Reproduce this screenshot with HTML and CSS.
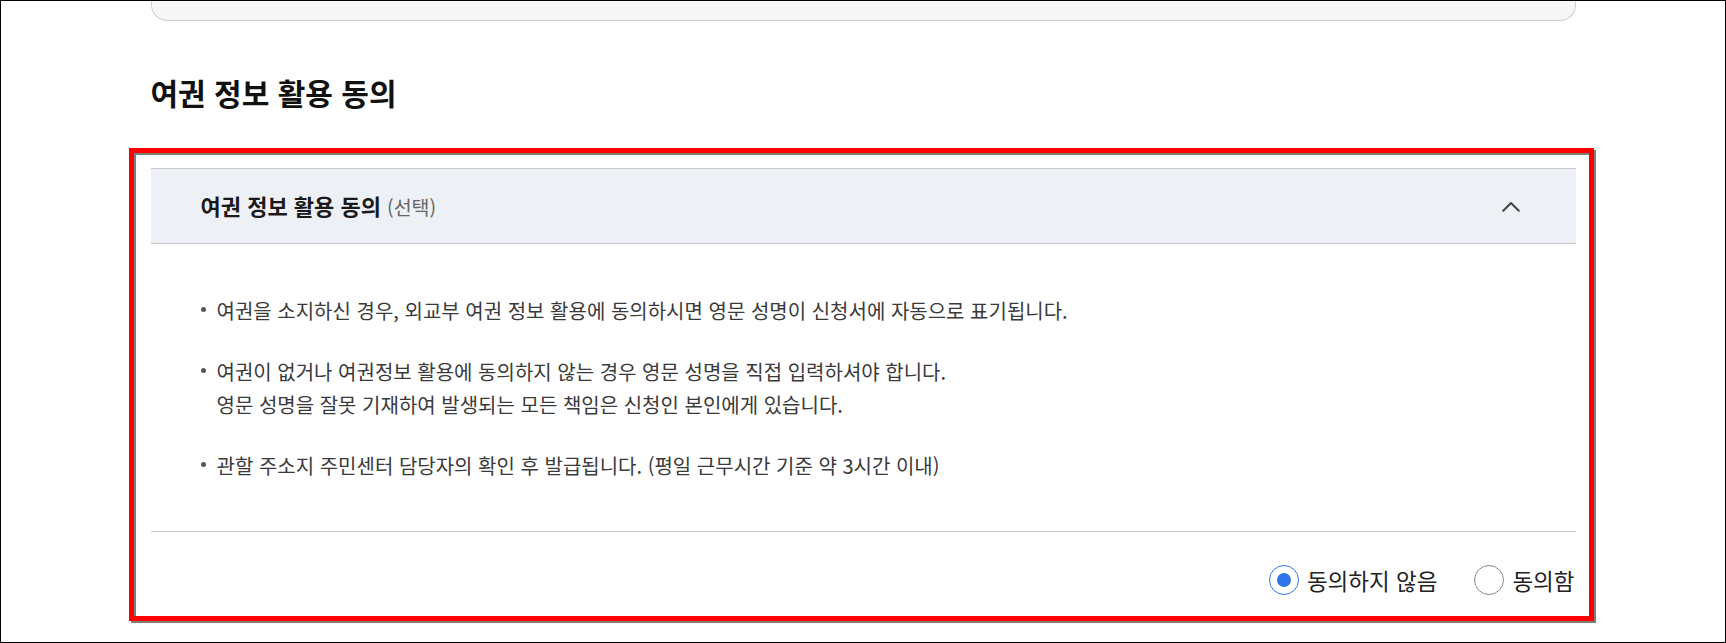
FILE: index.html
```html
<!DOCTYPE html>
<html lang="ko">
<head>
<meta charset="utf-8">
<title>여권 정보 활용 동의</title>
<link rel="stylesheet" href="styles.css">
</head>
<body>
<div class="frame">
  <div class="column">
    <div class="prev-card"></div>
    <h2 class="section-title">여권 정보 활용 동의</h2>
    <div class="highlight">
      <section class="accordion">
        <div class="acc-head">
          <div class="acc-title"><strong>여권 정보 활용 동의</strong> <span class="opt">(선택)</span></div>
          <svg class="chevron" width="18" height="11" viewBox="0 0 18 11" aria-hidden="true">
            <path d="M1.2 9.8 L9 2 L16.8 9.8" fill="none" stroke="#444" stroke-width="2" stroke-linecap="round" stroke-linejoin="round"/>
          </svg>
        </div>
        <div class="acc-body">
          <ul class="notes">
            <li>여권을 소지하신 경우, 외교부 여권 정보 활용에 동의하시면 영문 성명이 신청서에 자동으로 표기됩니다.</li>
            <li>여권이 없거나 여권정보 활용에 동의하지 않는 경우 영문 성명을 직접 입력하셔야 합니다.<br>영문 성명을 잘못 기재하여 발생되는 모든 책임은 신청인 본인에게 있습니다.</li>
            <li>관할 주소지 주민센터 담당자의 확인 후 발급됩니다. (평일 근무시간 기준 약 3시간 이내)</li>
          </ul>
        </div>
        <div class="choices">
          <label class="choice"><span class="radio checked"></span><span class="choice-text">동의하지 않음</span></label>
          <label class="choice"><span class="radio"></span><span class="choice-text">동의함</span></label>
        </div>
      </section>
    </div>
  </div>
</div>
</body>
</html>
```
FILE: styles.css
```css
html, body {
  margin: 0;
  padding: 0;
  background: #fff;
  height: 643px;
  overflow: hidden;
}

body {
  font-family: "Noto Sans CJK KR", "Noto Sans", sans-serif;
  color: #222;
}

.frame {
  box-sizing: border-box;
  height: 643px;
  border: 1px solid #000;
  overflow: hidden;
}

.column {
  width: 1425px;
  margin: 0 auto;
}

.prev-card {
  box-sizing: border-box;
  height: 20px;
  background: #f7f7f7;
  border: 1px solid #cfcfcf;
  border-top: none;
  border-radius: 0 0 16px 16px;
}

.section-title {
  margin: 52px 0 0;
  font-size: 30px;
  line-height: 39px;
  font-weight: 700;
  color: #111;
}

.highlight {
  margin: 36px -18px 0 -22px;
  padding: 15px 13px 21px 17px;
  border: 5px solid #ff0000;
  box-shadow: 2px 2px 0 #7d7d7d, inset 2px 2px 0 #7d7d7d;
}

.acc-head {
  box-sizing: border-box;
  height: 76px;
  display: flex;
  align-items: center;
  justify-content: space-between;
  padding: 0 56px 0 50px;
  background: #edf0f5;
  border-top: 1px solid #c8c8c8;
  border-bottom: 1px solid #c8c8c8;
}

.acc-title {
  font-size: 22px;
  line-height: 30px;
  color: #1a1a1a;
}

.acc-title strong {
  font-weight: 700;
}

.opt {
  font-size: 19.5px;
  color: #666;
  font-weight: 400;
}

.chevron {
  display: block;
}

.acc-body {
  padding: 50px 0 49px;
  border-bottom: 1px solid #c8c8c8;
}

.notes {
  list-style: none;
  margin: 0;
  padding: 0 0 0 66px;
  font-size: 20px;
  line-height: 33px;
  color: #3a3a3a;
}

.notes li + li {
  margin-top: 28px;
}

.notes li::before {
  content: "";
  display: inline-block;
  width: 5px;
  height: 5px;
  border-radius: 50%;
  background: #555;
  margin-left: -16px;
  margin-right: 11px;
  vertical-align: 7px;
}

.choices {
  display: flex;
  justify-content: flex-end;
  gap: 37px;
  padding: 33px 1px 0 0;
}

.choice {
  display: flex;
  align-items: center;
  gap: 8px;
  height: 30px;
}

.radio {
  box-sizing: border-box;
  width: 30px;
  height: 30px;
  border-radius: 50%;
  border: 1.5px solid #8a8a8a;
  background: #fff;
  display: flex;
  align-items: center;
  justify-content: center;
}

.radio.checked {
  border-color: #2f74eb;
}

.radio.checked::after {
  content: "";
  width: 14px;
  height: 14px;
  border-radius: 50%;
  background: #2f74eb;
}

.choice-text {
  font-size: 22.5px;
  line-height: 30px;
  color: #222;
}
```
